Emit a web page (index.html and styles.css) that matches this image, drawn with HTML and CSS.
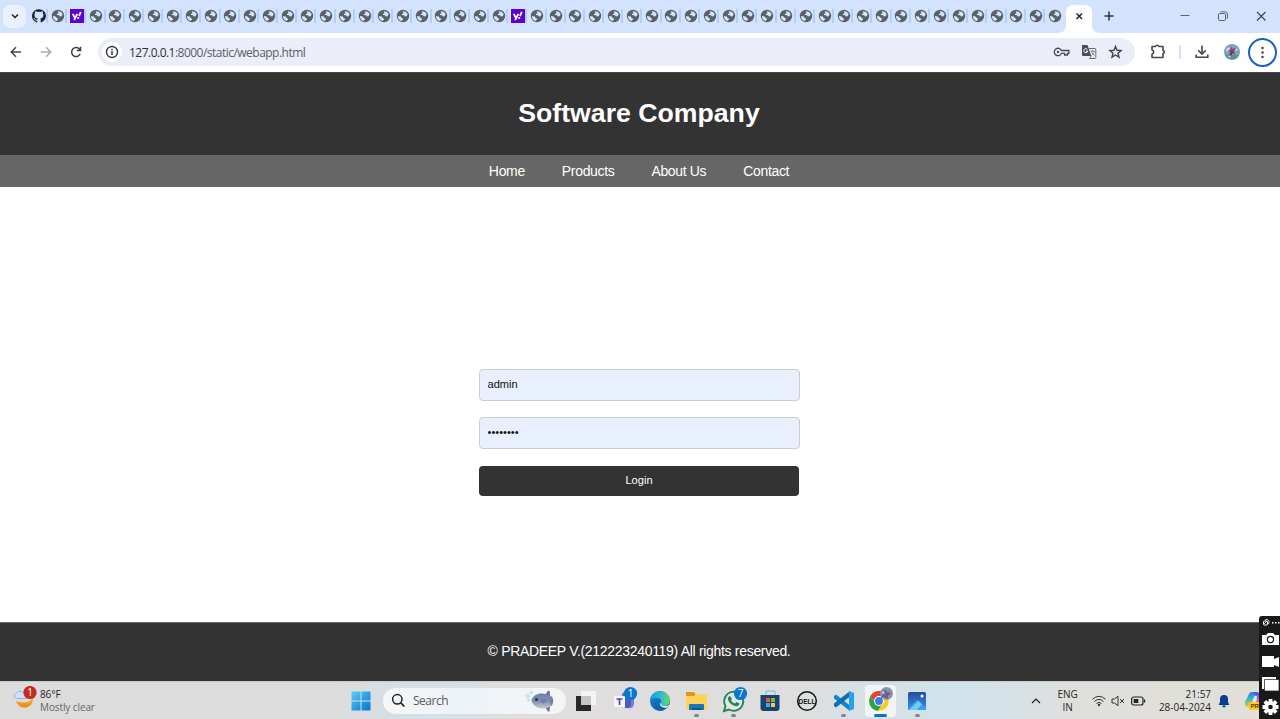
FILE: index.html
```html
<!DOCTYPE html>
<html lang="en">
<head>
<meta charset="utf-8">
<title>Software Company</title>
<link rel="stylesheet" href="styles.css">
</head>
<body>
<svg class="defs" aria-hidden="true">
  <symbol id="globe" viewBox="0 0 14 14"><circle cx="7" cy="7" r="6.200" fill="#5a6066"/><path d="M6.400 2.300C8.500 1.900 11 3 11.700 5.400L10.500 7.300 8.900 7.500 8 6.300 5.900 6 5.800 4.900 7.200 4.400 7.300 3.200zM2 6.900 4.800 7.500 5.400 8.800 7 9.500 6.700 11.100 5.400 11.900C3.100 11.300 1.900 9.400 2 6.900z" fill="#d3e3fd"/></symbol>
  <symbol id="yahoo" viewBox="0 0 14 14"><path d="M0 0h14v14H0z" fill="#5f01d1"/><path d="m2.800 4.800 2 4M7.300 4.800 4.200 11M10.800 2.800 9 7.200" fill="none" stroke="#fff" stroke-width="1.800"/><circle cx="8.200" cy="9" r="1.100" fill="#fff"/></symbol>
</svg>

<div class="tabstrip">
  <button class="tab-search"><svg width="10" height="10" viewBox="0 0 10 10"><path d="m2 3.500 3 3 3-3" fill="none" stroke="#1f1f1f" stroke-width="1.500"/></svg></button>
  <div class="tabs">
    <i><svg viewBox="0 0 16 16"><path fill="#1b2430" d="M8 .4a7.600 7.600 0 0 0-2.500 14.900c.4.1.5-.2.5-.4v-1.500c-2.100.4-2.600-.9-2.800-1.300-.1-.3-.5-.9-.9-1.100-.3-.2-.7-.6 0-.6s1.100.6 1.300.9c.8 1.300 2 .9 2.500.7.1-.6.3-.9.5-1.200-1.900-.2-3.800-.9-3.800-4 0-.9.3-1.600.8-2.200-.1-.2-.4-1 .1-2.100 0 0 .7-.2 2.200.8a7 7 0 0 1 4 0c1.500-1 2.200-.8 2.200-.8.5 1.100.2 1.900.1 2.100.5.6.8 1.300.8 2.200 0 3.100-1.900 3.800-3.700 4 .3.3.6.8.6 1.500v2.600c0 .2.1.5.5.4A7.600 7.600 0 0 0 8 .4z"/></svg></i>
    <i><svg><use href="#globe"/></svg></i>
    <i><svg><use href="#yahoo"/></svg></i>
    <i><svg><use href="#globe"/></svg></i><i><svg><use href="#globe"/></svg></i><i><svg><use href="#globe"/></svg></i><i><svg><use href="#globe"/></svg></i>
    <i><svg><use href="#globe"/></svg></i><i><svg><use href="#globe"/></svg></i><i><svg><use href="#globe"/></svg></i><i><svg><use href="#globe"/></svg></i>
    <i><svg><use href="#globe"/></svg></i><i><svg><use href="#globe"/></svg></i><i><svg><use href="#globe"/></svg></i><i><svg><use href="#globe"/></svg></i>
    <i><svg><use href="#globe"/></svg></i><i><svg><use href="#globe"/></svg></i><i><svg><use href="#globe"/></svg></i><i><svg><use href="#globe"/></svg></i>
    <i><svg><use href="#globe"/></svg></i><i><svg><use href="#globe"/></svg></i><i><svg><use href="#globe"/></svg></i><i><svg><use href="#globe"/></svg></i>
    <i><svg><use href="#globe"/></svg></i><i><svg><use href="#globe"/></svg></i>
    <i><svg><use href="#yahoo"/></svg></i>
    <i><svg><use href="#globe"/></svg></i><i><svg><use href="#globe"/></svg></i><i><svg><use href="#globe"/></svg></i><i><svg><use href="#globe"/></svg></i>
    <i><svg><use href="#globe"/></svg></i><i><svg><use href="#globe"/></svg></i><i><svg><use href="#globe"/></svg></i><i><svg><use href="#globe"/></svg></i>
    <i><svg><use href="#globe"/></svg></i><i><svg><use href="#globe"/></svg></i><i><svg><use href="#globe"/></svg></i><i><svg><use href="#globe"/></svg></i>
    <i><svg><use href="#globe"/></svg></i><i><svg><use href="#globe"/></svg></i><i><svg><use href="#globe"/></svg></i><i><svg><use href="#globe"/></svg></i>
    <i><svg><use href="#globe"/></svg></i><i><svg><use href="#globe"/></svg></i><i><svg><use href="#globe"/></svg></i><i><svg><use href="#globe"/></svg></i>
    <i><svg><use href="#globe"/></svg></i><i><svg><use href="#globe"/></svg></i><i><svg><use href="#globe"/></svg></i><i><svg><use href="#globe"/></svg></i>
    <i><svg><use href="#globe"/></svg></i><i><svg><use href="#globe"/></svg></i><i><svg><use href="#globe"/></svg></i><i><svg><use href="#globe"/></svg></i>
  </div>
  <svg class="active-tab" width="42" height="29" viewBox="0 0 42 29"><path d="M0 29c5 0 8-3 8-8V8c0-4 3-7 7-7h12c4 0 7 3 7 7v13c0 5 3 8 8 8z" fill="#fff"/><path d="m18.500 9.500 5.600 5.600m0-5.600-5.600 5.600" stroke="#1f1f1f" stroke-width="1.400"/></svg>
  <svg class="newtab" width="12" height="12" viewBox="0 0 12 12"><path d="M6 1.500v9M1.500 6h9" stroke="#303338" stroke-width="1.500"/></svg>
  <div class="winctl">
    <svg viewBox="0 0 12 12"><path d="M1.500 5.500h9" stroke="#5c6470"/></svg>
    <svg viewBox="0 0 12 12"><g fill="none" stroke="#5c6470"><rect x="1.500" y="3.500" width="7" height="7" rx="1.300"/><path d="M3.500 1.800h4.700a2.200 2.200 0 0 1 2.200 2.200v4.700"/></g></svg>
    <svg viewBox="0 0 12 12"><path d="m2 2 8.500 8.500M10.500 2 2 10.500" stroke="#3d434d" stroke-width="1.100"/></svg>
  </div>
</div>

<div class="toolbar">
  <svg class="ic" viewBox="0 0 18 18"><path d="M14 9H4.500M9 4.200 4.200 9 9 13.800" fill="none" stroke="#44474b" stroke-width="1.500"/></svg>
  <svg class="ic nav-ic" viewBox="0 0 18 18"><path d="M4 9h9.500M9 4.200 13.800 9 9 13.800" fill="none" stroke="#a9abae" stroke-width="1.500"/></svg>
  <svg class="ic nav-ic" viewBox="0 0 18 18"><path d="M13.200 11A4.500 4.500 0 1 1 12.600 6.200L13.500 7.400M13.500 3.700v3.900H9.700" fill="none" stroke="#3c3f43" stroke-width="1.500"/></svg>
  <div class="omnibox">
    <span class="info"><svg viewBox="0 0 18 18"><circle cx="9" cy="9" r="5.500" fill="none" stroke="#36393d" stroke-width="1.400"/><path d="M9 8.300V12M9 5.700v1.500" stroke="#36393d" stroke-width="1.500"/></svg></span>
    <span class="url"><b>127.0.0.1</b>:8000/static/webapp.html</span>
    <svg class="ic" viewBox="0 0 18 18"><g fill="none" stroke="#47494e" stroke-width="1.300"><path d="M8.400 7.500h7.500v2.900h-1.400V12h-2.900v-1.600H8.400a3.700 3.700 0 1 1 0-2.900z"/></g><circle cx="5" cy="9" r="1.200" fill="#47494e"/></svg>
    <svg class="ic" viewBox="0 0 18 18"><path d="M2 2h5.500l1.200 3.500L11.200 13H3q-1 0-1-1z" fill="#4a4d52"/><path d="M8.700 5.500H15q.8 0 .8.800v8.400q0 .8-.8.800H9.500l1.700-2.500" fill="none" stroke="#6b6e74" stroke-width="1"/><path d="M10.500 8.200h4.200M12.500 7v1M14 8.200c0 2-1.200 3.200-2.500 4.200M11.300 9.200l2.900 3.200" fill="none" stroke="#85878d" stroke-width="1"/><path d="M7.400 6.400a2 2 0 1 0 .4 1.700H6" fill="none" stroke="#fff" stroke-width="1"/></svg>
    <svg class="ic" viewBox="0 0 18 18"><path d="m8.500 3.500 1.500 3.800 4.100.3-3.100 2.600 1 4-3.500-2.200L5 14.200l1-4-3.100-2.600 4.100-.3z" fill="none" stroke="#44474b" stroke-width="1.400"/></svg>
  </div>
  <svg class="ic ext" viewBox="0 0 18 18"><path d="M3 3.500h3.500Q7 2.300 8.200 2.300T10 3.500h4v4q1.300.4 1.300 1.500T14 10.500v4H3v-3.200q1.700-.7 1.700-2.200T3 7z" fill="none" stroke="#44474b" stroke-width="1.600" stroke-linejoin="round"/></svg>
  <span class="divider"></span>
  <svg class="ic dl" viewBox="0 0 18 18"><path d="M9 2.500v8M5.200 7.200 9 11l3.800-3.800M3.200 11.500v2.700h11.600v-2.700" fill="none" stroke="#44474b" stroke-width="1.600"/></svg>
  <svg class="avatar" viewBox="0 0 16 16"><circle cx="8" cy="8" r="8" fill="#7f9fc4"/><path d="M1 11h14a8 8 0 0 1-14 0z" fill="#5f8f86"/><path d="m2 5 3-2 1 2-3 3zM11 3l3 3-2 1zM4 12l3-1-1 3z" fill="#c9dcf0"/><path d="M7 2.500 8.500 5 12 3.500 10 7l1 4-2.500-2L5 12l1-4.500L3.500 6 6.500 6z" fill="#9b3f55"/><path d="m7 7 2 1-1 3-2 1z" fill="#34498a"/></svg>
  <span class="menu"><svg viewBox="0 0 18 18"><g fill="#44474b"><circle cx="9" cy="3.500" r="1.500"/><circle cx="9" cy="9" r="1.500"/><circle cx="9" cy="14.500" r="1.500"/></g></svg></span>
</div>

<header class="site-header"><h1>Software Company</h1></header>
<nav class="site-nav"><a>Home</a><a>Products</a><a>About Us</a><a>Contact</a></nav>
<main class="login">
  <form class="login-form">
    <input type="text" value="admin">
    <input type="password" value="password">
    <button type="button">Login</button>
  </form>
</main>
<footer class="site-footer">© PRADEEP V.(212223240119) All rights reserved.</footer>

<div class="taskbar">
  <svg class="weather" width="24" height="26" viewBox="0 0 24 26"><defs><linearGradient id="moon" x2="0" y2="1"><stop stop-color="#f9bc50"/><stop offset="1" stop-color="#ec850c"/></linearGradient></defs><path d="M19 11c0 5-8 7-16 4 3 10 17 8 17-2 0-1 0-2-1-2z" fill="url(#moon)"/><path d="M3.500 12.500a2.600 2.600 0 0 1 0-5q2-3.500 5.500-2l4 4v3z" fill="#cfe0fa" stroke="#8fb6f0"/><circle cx="17" cy="6.500" r="6.600" fill="#c42b1c"/><text x="17" y="10.100" class="badge-text">1</text></svg>
  <div class="weather-text"><span>86°F</span><span class="muted">Mostly clear</span></div>
  <svg class="start" width="20" height="20" viewBox="0 0 20 20"><defs><linearGradient id="win" x2="1" y2="1"><stop stop-color="#58cdf8"/><stop offset="1" stop-color="#0873cf"/></linearGradient></defs><path d="M.5.500h9v9h-9zM10.500.500h9v9h-9zM.5 10.500h9v9h-9zM10.500 10.500h9v9h-9z" fill="url(#win)"/></svg>
  <div class="search">
    <svg width="15" height="15" viewBox="0 0 15 15"><circle cx="6.300" cy="6.300" r="4.700" fill="none" stroke="#222" stroke-width="1.500"/><path d="m9.800 9.800 3.600 3.700" stroke="#222" stroke-width="1.700"/></svg>
    <span>Search</span>
    <svg class="fish" width="32" height="22" viewBox="0 0 32 22"><defs><linearGradient id="fish" x2="0" y2="1"><stop stop-color="#6d82a6"/><stop offset=".5" stop-color="#7c90b3"/><stop offset="1" stop-color="#c6cdd2"/></linearGradient></defs><path d="m20 5 3-4.500 2 1V7zM20 17l3 4.500h1.500L25 16z" fill="#77719f"/><path d="M6.500 10.500C8 5 14 2.500 20 4q5 1.500 7.500 3.500 1.800 3.500 0 7Q24 18 19 18.500C12 19 7.500 15 6.500 10.500z" fill="url(#fish)"/><path d="M26 5.500q4 5.500 0 11-1.500-5 0-11z" fill="#7d78ad"/><path d="M16 9.500q5-2 6 1-2 4-6 2z" fill="#7a78bd"/><circle cx="11.500" cy="9.500" r="1.500" fill="#253348"/><g fill="#d2ecf2" stroke="#9fd0db" stroke-width=".6"><circle cx="2.500" cy="6" r="1.600"/><circle cx="6" cy="2.500" r="1.200"/><circle cx="3.500" cy="10" r="1"/></g></svg>
  </div>
  <div class="apps">
    <span><svg viewBox="0 0 24 24"><path d="M2 7h15v15H2z" fill="#292929"/><path d="M7 2h15v14H7z" fill="#f6f6f6" opacity=".9"/><path d="M7 7h10v9H7z" fill="#c5c5c5"/></svg></span>
    <span><svg viewBox="0 0 24 24"><path d="M11 7h12v8c0 5-7 6-11 1z" fill="#777bdc"/><circle cx="14" cy="6" r="3" fill="#6268cc"/><path d="M11 9h9v8q-5 5-9-1z" fill="#5459bd"/><path d="M3 7h11v11H3z" fill="#f5f5fb"/><path d="M5.500 10h6M8.500 10v6" stroke="#484caa" stroke-width="1.700"/><circle cx="19.500" cy="4.500" r="6.600" fill="#0878d1"/><text x="19.500" y="8.100" class="badge-text">1</text></svg></span>
    <span><svg viewBox="0 0 24 24"><defs><linearGradient id="edgeA" x2="1"><stop stop-color="#1c9bdc"/><stop offset=".5" stop-color="#2bb9d6"/><stop offset="1" stop-color="#67dc5d"/></linearGradient><linearGradient id="edgeB" x2="1" y2="1"><stop stop-color="#178ad8"/><stop offset="1" stop-color="#07519b"/></linearGradient></defs><circle cx="12" cy="12" r="10" fill="url(#edgeB)"/><path d="M2 12C2 3 12-1 19 5c5 5 3 12-3 12-3 0-4-2-3-3 1-3-1-5-4-5-4 0-7 1-7 3z" fill="url(#edgeA)"/><path d="M13 13c-1 2 1 4 4 4 2 0 4-1 5-2-1 2-3 4-5 4-5-1-6-4-4-6z" fill="#e0e2e4"/><path d="M10 10c-5 5 0 12 6 11-8 3-13-4-6-11z" fill="#0f61b4"/></svg></span>
    <span class="running"><svg viewBox="0 0 24 24"><path d="M2 3h8l2 3h10v4H2z" fill="#df9815"/><path d="M2 7h8l2-2h11v16H2z" fill="#ffd45a"/><path d="M5 16q0-1 1-1h13q1 0 1 1v5H5z" fill="#1678bb"/><path d="M8 19h9v2H8z" fill="#0b568f"/></svg></span>
    <span class="running"><svg viewBox="0 0 24 24"><path d="m3 22 1.500-5A9.500 9.500 0 1 1 8 20.500z" fill="#e4e8e5" stroke="#258454" stroke-width="1.900"/><path d="m9 7 2 3-1 1.500q1 2 4 3l1.500-1.500 3 1.500c-1 5-8 2-10-1S6 8 9 7z" fill="#258454"/><circle cx="19.500" cy="4.500" r="6.600" fill="#0878d1"/><text x="19.500" y="8.100" class="badge-text">7</text></svg></span>
    <span><svg viewBox="0 0 24 24"><path d="M8 7V3q0-1 1-1h7q1 0 1 1v4" fill="none" stroke="#86cceb" stroke-width="1.500"/><path d="M2.500 6h19v13q0 3-3 3h-13q-3 0-3-3z" fill="#164572"/><path fill="#f15831" d="M8 9h4v4H8z"/><path fill="#86b83d" d="M13 9h4v4h-4z"/><path fill="#43a9e5" d="M8 14h4v4H8z"/><path fill="#f8cc48" d="M13 14h4v4h-4z"/></svg></span>
    <span><svg viewBox="0 0 24 24"><circle cx="12" cy="12" r="9.300" fill="none" stroke="#111" stroke-width="1.500"/><text x="12" y="14.500" class="dell">DELL</text></svg></span>
    <span class="running"><svg viewBox="0 0 24 24"><path d="m2 7 2-1.500 14 11V22L2 9.500z" fill="#1684ca"/><path d="m2 17 2 1.500L18 7.500V2L2 14.500z" fill="#0c71b4"/><path d="m17 2 5 2v16l-5 2z" fill="#27a0ed"/></svg></span>
    <span class="running active"><svg viewBox="0 0 24 24"><circle cx="11" cy="12" r="9.800" fill="#f9ca24"/><path d="M2.500 7a9.800 9.800 0 0 1 17 0H11l-4 6z" fill="#e24335"/><path d="M2.500 7a9.800 9.800 0 0 0 7.500 14.800l4-7-7-1z" fill="#2ba24c"/><circle cx="11" cy="12" r="5" fill="#fff"/><circle cx="11" cy="12" r="3.900" fill="#367de7"/><circle cx="18.500" cy="4.500" r="6.500" fill="#8494b4"/><path d="m17 0 2 3 4 1-3 3v3l-4-2-3 1 2-4z" fill="#6f5f80"/><path d="m13 4 3-2 1 3z" fill="#b8cae0"/></svg></span>
    <span class="running"><svg viewBox="0 0 24 24"><defs><linearGradient id="photo" x2="0" y2="1"><stop stop-color="#244f9b"/><stop offset="1" stop-color="#3b8ced"/></linearGradient></defs><rect x="3" y="3" width="18" height="18" rx="1.500" fill="url(#photo)"/><path d="m3 20 8.500-8.500q1-1 2 0L21 19v2H3z" fill="#3a9fe8"/><path d="M4 21 13.500 12l3.500 3.500L11.500 21z" fill="#6cd0f5"/><circle cx="17" cy="7" r="1.500" fill="#fff"/></svg></span>
  </div>
  <svg class="chev" width="10" height="10" viewBox="0 0 10 10"><path d="m1 7 4-4 4 4" fill="none" stroke="#222" stroke-width="1.200"/></svg>
  <div class="lang"><span>ENG</span><span>IN</span></div>
  <svg class="wifi" width="14" height="14" viewBox="0 0 14 14"><g fill="none" stroke="#333"><path d="M.5 5.300q6.500-6 13 0M2.500 7.500q4.500-4.200 9 0M4.500 9.500q2.500-2.400 5 0"/></g><circle cx="7" cy="11" r="1.200" fill="#333"/></svg>
  <svg class="mute" width="14" height="12" viewBox="0 0 14 12"><path d="M1 4h2.500L7 1.200v9.600L3.500 8H1zM9 4l4 4M13 4 9 8" fill="none" stroke="#333"/></svg>
  <svg class="battery" width="15" height="10" viewBox="0 0 15 10"><rect x=".7" y="1" width="11.300" height="8" rx="2" fill="none" stroke="#222" stroke-width="1.200"/><path d="M2.700 3h4.600v4H2.700zM13 3.500h1.200v3H13z" fill="#222"/></svg>
  <div class="clock"><span>21:57</span><span>28-04-2024</span></div>
  <svg class="bell" width="12" height="14" viewBox="0 0 12 14"><path d="M6 1a4 4 0 0 1 4 4v3l1.400 3H.6L2 8V5a4 4 0 0 1 4-4zM4 11.500h4Q7.500 13.400 6 13.400T4 11.500z" fill="#073f8e"/></svg>
  <svg class="copilot" width="19" height="20" viewBox="0 0 19 20"><defs><linearGradient id="cop" x2="0" y2="1"><stop stop-color="#2a7be0"/><stop offset=".45" stop-color="#36b6d0"/><stop offset=".75" stop-color="#8dc860"/><stop offset="1" stop-color="#f3c33a"/></linearGradient><linearGradient id="cop2" x2="0" y2="1"><stop stop-color="#3c50dc"/><stop offset=".5" stop-color="#b067dd"/><stop offset="1" stop-color="#f2719a"/></linearGradient></defs><path d="M5 3q1-2 3-2h5l-4 12q-1 3-3 3H4q-4 0-3-5z" fill="url(#cop)"/><path d="M10 1h3q2 0 3 3l2 6q1 5-3 5h-4l2-7z" fill="url(#cop2)"/><path d="m8 11 2.500-6h2.500l-2 6z" fill="#e9e5ee"/><rect x="4.500" y="11" width="16" height="8" rx="2" fill="#ffca24"/><text x="6.500" y="17.200" class="pre">PRE</text></svg>
</div>

<div class="capture">
  <svg width="21" height="103" viewBox="0 0 21 103"><g fill="none" stroke="#fff"><rect x="4.500" y="5" width="4" height="4" rx="1"/><path d="M6 4q3-2 4 1t-2 3M5 8l3-3" stroke-width=".8"/></g><path d="M13 6h1.500v1.500H13zM16 6h1.500v1.500H16zM19 6h1.500v1.500H19z" fill="#fff"/><path d="M3 19h4l2-2h5l2 2h4v10H3z" fill="#fff"/><circle cx="11.500" cy="23.500" r="3.100" fill="none" stroke="#191919" stroke-width="1.200"/><path d="M3 40h12v3l5-2v10l-5-2v2H3z" fill="#fff"/><path d="M3 61h14v3H6v9H3z" fill="#fff"/><path d="M5.500 63.500H20V75H5.500z" fill="#fff" stroke="#191919" stroke-width=".7"/><g transform="translate(11.500 91)" stroke="#fff" stroke-width="3.800"><path d="M0-8V8M-8 0H8M-5.700-5.700 5.700 5.700M-5.700 5.700 5.700-5.700"/><circle r="4.200" fill="#191919" stroke-width="3.800"/></g></svg>
</div>
</body>
</html>
```
FILE: styles.css
```css
* { box-sizing: border-box; }
body {
  margin: 0;
  width: 1280px;
  height: 719px;
  overflow: hidden;
  display: flex;
  flex-direction: column;
  background: #fff;
  font-family: "Liberation Sans", Arial, sans-serif;
}
svg { display: block; flex: none; }
.defs { display: none; }

/* Browser tab strip */
.tabstrip {
  height: 33px;
  flex: none;
  display: flex;
  align-items: center;
  background: #d3e3fd;
}
.tab-search {
  width: 23px;
  height: 23px;
  flex: none;
  margin: 0 0 1px 3px;
  padding: 0;
  display: grid;
  place-items: center;
  border: 0;
  border-radius: 7px;
  background: #e9f1fe;
}
.tabs {
  display: flex;
  flex: none;
  width: 1035.200px;
  margin-left: 2.900px;
}
.tabs i {
  flex: 1;
  height: 14px;
  margin-bottom: 1px;
  display: flex;
  justify-content: center;
  border-right: 2px solid #b4cffb;
}
.tabs i:last-child { border-right-color: transparent; }
.tabs svg { width: 14px; height: 14px; margin-left: 2.400px; }
.active-tab { align-self: flex-end; margin-left: -6.100px; }
.newtab { margin: 0 0 1px 3px; }
.winctl { display: flex; gap: 26px; margin: 0 0 1px 64px; }
.winctl svg { width: 12px; height: 12px; }

/* Address bar */
.toolbar {
  height: 39px;
  flex: none;
  display: flex;
  align-items: center;
  padding: 0 0 1px 7px;
  background: #fff;
}
.ic { width: 18px; height: 18px; }
.nav-ic { margin-left: 12px; }
.omnibox {
  width: 1037px;
  height: 28px;
  flex: none;
  margin-left: 13px;
  padding: 0 10.500px 0 4px;
  display: flex;
  align-items: center;
  gap: 9px;
  border-radius: 14px;
  background: #ebedf8;
}
.info {
  width: 20px;
  height: 20px;
  flex: none;
  display: grid;
  place-items: center;
  border-radius: 50%;
  background: #fff;
}
.info svg { width: 18px; height: 18px; }
.url {
  flex: 1;
  margin: 2px 0 0 -2px;
  font: 12px/18px "Open Sans", sans-serif;
  letter-spacing: -.52px;
  color: #5b5e66;
}
.url b { font-weight: 400; color: #2b2d31; }
.ext { margin-left: 14px; }
.divider { width: 1.500px; height: 14px; margin-left: 12px; background: #d3e2fb; }
.dl { margin-left: 12.500px; }
.avatar { width: 16px; height: 16px; margin-left: 13px; }
.menu {
  width: 29px;
  height: 29px;
  margin-left: 8px;
  display: grid;
  place-items: center;
  border: 2px solid #1a5fc9;
  border-radius: 50%;
}
.menu svg { width: 15px; height: 15px; }

/* Web page */
.site-header {
  height: 83px;
  flex: none;
  display: grid;
  place-items: center;
  padding: 0 2px 2px 0;
  border-top: 1px solid #444547;
  background: #333;
  color: #fff;
}
.site-header h1 { margin: 0; font-size: 26.670px; line-height: 31px; }
.site-nav {
  height: 32px;
  flex: none;
  display: flex;
  justify-content: center;
  align-items: center;
  gap: 37px;
  padding-right: 2px;
  background: #666;
  color: #fff;
  font-size: 14px;
  letter-spacing: -.34px;
}
.login { flex: 1; display: flex; justify-content: center; align-items: flex-start; padding: 182px 2px 0 0; }
.login-form { width: 321px; display: flex; flex-direction: column; gap: 16px; }
.login-form input, .login-form button {
  width: 100%;
  height: 32px;
  padding: 0 8px 2px;
  border: 1px solid #ccc;
  border-radius: 4px;
  background: #e8f0fe;
  color: #111;
  font: 11.110px "Liberation Sans", Arial, sans-serif;
}
.login-form button {
  width: 320px;
  height: 30.500px;
  margin-top: .5px;
  padding: 0 7px 2px 8px;
  border: 0;
  background: #333;
  color: #fff;
}
.site-footer {
  height: 59px;
  flex: none;
  display: grid;
  place-items: center;
  padding: 0 2px 2px 0;
  border-top: 1px solid #666;
  background: #333;
  color: #fff;
  font-size: 14px;
  letter-spacing: -.31px;
}

/* Desktop taskbar */
.taskbar {
  height: 38px;
  flex: none;
  display: flex;
  align-items: center;
  border-top: 1px solid #c9c9c9;
  background: linear-gradient(90deg, #dcdcdc 0 26%, #d4e0e7 33%, #e0dddd 41%, #dedede 62%, #d0e2eb 74%, #d5e2e8 78%, #dfdfdc 84%, #e2dfd8);
  font: 10px/13px "Open Sans", sans-serif;
  color: #252525;
  white-space: nowrap;
}
.weather { margin: 0 0 3px 13px; }
.badge-text { font: 10px "Open Sans", sans-serif; fill: #fff; text-anchor: middle; }
.weather-text { width: 100px; margin: 0 0 0 3px; display: flex; flex-direction: column; font-size: 10px; letter-spacing: -.1px; }
.muted { color: #666; }
.start { margin-left: 211px; }
.search {
  width: 183px;
  height: 26px;
  flex: none;
  margin-left: 12px;
  padding: 0 9px 0 8px;
  display: flex;
  align-items: center;
  border-radius: 13px;
  background: linear-gradient(90deg, #f5f6f7, #ecf3f9 45%, #f5f5f5);
  font-size: 12px;
  letter-spacing: -.5px;
  color: #5a5a5a;
}
.search span { margin-left: 7px; flex: 1; }
.apps { display: flex; flex: none; margin-left: 1.600px; }
.apps span {
  position: relative;
  width: 36.800px;
  height: 38px;
  display: grid;
  place-items: center;
}
.apps svg { width: 24px; height: 24px; overflow: visible; position: relative; }
.running::after {
  content: "";
  position: absolute;
  left: 16px;
  bottom: 3px;
  width: 5px;
  height: 2.500px;
  border-radius: 2px;
  background: #858585;
}
.active::before {
  content: "";
  position: absolute;
  inset: 3px 3px 3px 3px;
  border-radius: 4px;
  background: #f2f4f5;
}
.active::after { left: 12px; width: 13px; background: #0873c4; }
.dell { font: bold 6.500px "Liberation Sans", sans-serif; fill: #111; text-anchor: middle; }
.chev { margin-left: 95px; }
.lang { width: 28px; margin: 0 0 0 13px; display: flex; flex-direction: column; align-items: center; }
.wifi { margin-left: 10px; }
.mute { margin-left: 5px; }
.battery { margin-left: 6px; }
.clock { width: 56px; margin: 0 0 0 9.500px; display: flex; flex-direction: column; align-items: flex-end; }
.bell { margin-left: 7px; }
.copilot { margin-left: 14px; }
.pre { font: bold 6px "Liberation Sans", sans-serif; fill: #533d00; }

/* Floating screen-capture strip */
.capture {
  position: absolute;
  left: 1259px;
  top: 616px;
  width: 21px;
  height: 103px;
  overflow: hidden;
  border-radius: 3px 0 0 0;
  background: #191919;
}
```
